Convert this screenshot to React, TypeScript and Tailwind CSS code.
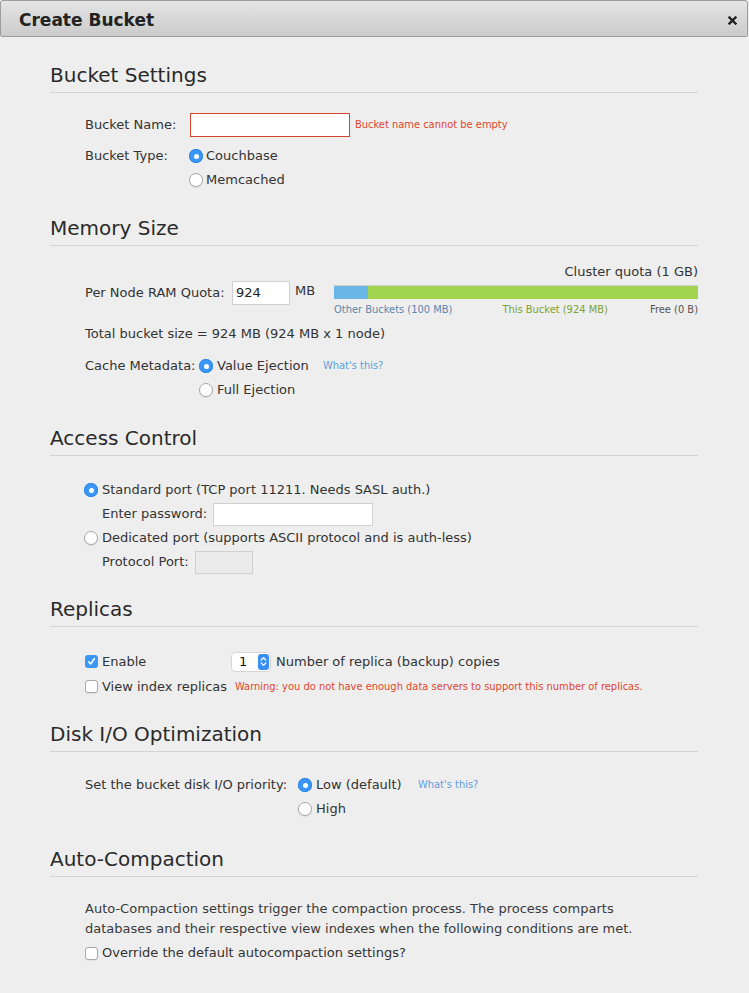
import React from 'react'

const small = "font-['DejaVu_Sans_Condensed','DejaVu_Sans',sans-serif] [font-stretch:condensed] text-[11px]"

function Radio({ checked }: { checked?: boolean }) {
  if (checked) {
    return (
      <span className="flex h-[14px] w-[14px] shrink-0 items-center justify-center rounded-full bg-[#3a97f7] shadow-[inset_0_0_0_1px_#2f88e8]">
        <span className="h-[5px] w-[5px] rounded-full bg-white" />
      </span>
    )
  }
  return <span className="h-[14px] w-[14px] shrink-0 rounded-full border border-[#a8a8a8] bg-white shadow-[0_1px_1px_rgba(0,0,0,0.08)]" />
}

function Checkbox({ checked }: { checked?: boolean }) {
  if (checked) {
    return (
      <span className="flex h-[13px] w-[13px] shrink-0 items-center justify-center rounded-[3px] bg-[#3a97f7]">
        <svg width="9" height="9" viewBox="0 0 9 9">
          <path d="M1.8 4.9L3.6 7L7.3 1.7" stroke="white" strokeWidth="1.6" fill="none" strokeLinecap="round" strokeLinejoin="round" />
        </svg>
      </span>
    )
  }
  return <span className="h-[13px] w-[13px] shrink-0 rounded-[3px] border border-[#a8a8a8] bg-white shadow-[0_1px_1px_rgba(0,0,0,0.06)]" />
}

function Section({ title, className, children }: { title: string; className?: string; children: React.ReactNode }) {
  return (
    <section className={className}>
      <h2 className="border-b border-[#d4d4d4] pb-[5px] text-[20px] leading-[24px] text-[#2a2a2a]">{title}</h2>
      {children}
    </section>
  )
}

export default function App() {
  return (
    <div className="min-h-[993px] bg-[#eeeeee] font-['DejaVu_Sans',sans-serif] text-[13px] leading-[18px] text-[#333]">
      {/* dialog header */}
      <div className="mr-[1px] flex h-[37px] items-start justify-between rounded-t-[3px] rounded-b-[2px] border border-[#9d9d9d] bg-linear-to-b from-[#e5e5e5] to-[#cbcbcb] pl-[18px] pr-[10px]">
        <h1 className="mt-[9px] text-[17px] font-bold leading-[20px] text-[#222]">Create Bucket</h1>
        <svg className="mt-[15px]" width="9" height="9" viewBox="0 0 9 9">
          <path d="M1.5 1.5L7.5 7.5M7.5 1.5L1.5 7.5" stroke="#222" strokeWidth="2.4" strokeLinecap="square" />
        </svg>
      </div>

      <div className="pl-[50px] pr-[51px]">
        <Section title="Bucket Settings" className="mt-[26px]">
          <div className="mt-[20px] pl-[35px]">
            <div className="flex h-[24px] items-center">
              <span className="w-[105px]">Bucket Name:</span>
              <div className="h-[24px] w-[160px] border border-[#d9432c] bg-white" />
              <span className={`ml-[5px] text-[#e0462d] ${small}`}>Bucket name cannot be empty</span>
            </div>
            <div className="mt-[7px] flex">
              <span className="w-[104px] leading-[24px]">Bucket Type:</span>
              <div>
                <div className="flex h-[24px] items-center">
                  <Radio checked />
                  <span className="ml-[3px]">Couchbase</span>
                </div>
                <div className="flex h-[24px] items-center">
                  <Radio />
                  <span className="ml-[3px]">Memcached</span>
                </div>
              </div>
            </div>
          </div>
        </Section>

        <Section title="Memory Size" className="mt-[24px]">
          <div className="mt-[17px] flex items-start pl-[35px]">
            <div className="mt-[18px] flex items-start">
              <span className="w-[147px] leading-[24px]">Per Node RAM Quota:</span>
              <div className="h-[24px] w-[58px] border border-[#d0d0d0] bg-white pl-[3px] leading-[22px] text-[#222]">924</div>
              <span className="ml-[5px] leading-[20px]">MB</span>
            </div>
            <div className="ml-auto w-[364px]">
              <div className="text-right">Cluster quota (1 GB)</div>
              <div className="mt-[4px] flex h-[14px] flex-col border-t border-[#cfcfcf] bg-white">
                <div className="flex h-[13px]">
                  <div className="w-[34px] bg-[#6ab6e7]" />
                  <div className="flex-1 bg-[#a1d54f]" />
                </div>
              </div>
              <div className={`mt-[4px] flex leading-[14px] ${small}`}>
                <span className="text-[#5b86ae]">Other Buckets (100 MB)</span>
                <span className="ml-[50px] text-[#7aa332]">This Bucket (924 MB)</span>
                <span className="ml-auto text-[#555]">Free (0 B)</span>
              </div>
            </div>
          </div>
          <div className="mt-[8px] pl-[35px]">Total bucket size = 924 MB (924 MB x 1 node)</div>
          <div className="mt-[11px] flex pl-[35px]">
            <span className="w-[114px] leading-[24px]">Cache Metadata:</span>
            <div>
              <div className="flex h-[24px] items-center">
                <Radio checked />
                <span className="ml-[4px] w-[106px]">Value Ejection</span>
                <span className={`text-[#5f9fdb] ${small}`}>What's this?</span>
              </div>
              <div className="flex h-[24px] items-center">
                <Radio />
                <span className="ml-[4px]">Full Ejection</span>
              </div>
            </div>
          </div>
        </Section>

        <Section title="Access Control" className="mt-[24px]">
          <div className="mt-[22px] pl-[34px]">
            <div className="flex h-[24px] items-center">
              <Radio checked />
              <span className="ml-[4px]">Standard port (TCP port 11211. Needs SASL auth.)</span>
            </div>
            <div className="flex h-[24px] items-center pl-[18px]">
              <span className="w-[111px]">Enter password:</span>
              <div className="h-[23px] w-[160px] border border-[#d0d0d0] bg-white" />
            </div>
            <div className="flex h-[24px] items-center">
              <Radio />
              <span className="ml-[4px]">Dedicated port (supports ASCII protocol and is auth-less)</span>
            </div>
            <div className="flex h-[24px] items-center pl-[18px]">
              <span className="w-[93px]">Protocol Port:</span>
              <div className="h-[23px] w-[58px] border border-[#d0d0d0] bg-[#ebebeb]" />
            </div>
          </div>
        </Section>

        <Section title="Replicas" className="mt-[23px]">
          <div className="mt-[22px] pl-[35px]">
            <div className="flex h-[25px] items-center">
              <Checkbox checked />
              <span className="ml-[4px] w-[130px]">Enable</span>
              <div className="flex h-[18px] w-[38px] items-center justify-between rounded-[4px] bg-white pl-[7px] pr-[1px] shadow-[0_0_0_1px_#d6d6d6,0_1px_1px_rgba(0,0,0,0.1)]">
                <span className="leading-[16px] text-[#111]">1</span>
                <span className="flex h-[16px] w-[11px] items-center justify-center rounded-[3px] bg-[#3a8ff2]">
                  <svg width="7" height="11" viewBox="0 0 7 11">
                    <path d="M1.2 4L3.5 1.8L5.8 4M1.2 7L3.5 9.2L5.8 7" stroke="white" strokeWidth="1.2" fill="none" strokeLinecap="round" strokeLinejoin="round" />
                  </svg>
                </span>
              </div>
              <span className="ml-[6px]">Number of replica (backup) copies</span>
            </div>
            <div className="flex h-[25px] items-center">
              <Checkbox />
              <span className="ml-[4px] w-[133px]">View index replicas</span>
              <span className={`text-[#e0462d] ${small}`}>Warning: you do not have enough data servers to support this number of replicas.</span>
            </div>
          </div>
        </Section>

        <Section title="Disk I/O Optimization" className="mt-[23px]">
          <div className="mt-[21px] flex pl-[35px]">
            <span className="w-[213px] leading-[24px]">Set the bucket disk I/O priority:</span>
            <div>
              <div className="flex h-[24px] items-center">
                <Radio checked />
                <span className="ml-[4px] w-[102px]">Low (default)</span>
                <span className={`text-[#5f9fdb] ${small}`}>What's this?</span>
              </div>
              <div className="flex h-[24px] items-center">
                <Radio />
                <span className="ml-[4px]">High</span>
              </div>
            </div>
          </div>
        </Section>

        <Section title="Auto-Compaction" className="mt-[26px]">
          <p className="mt-[22px] w-[600px] pl-[35px] leading-[20px] text-[#3a3a3a]">
            Auto-Compaction settings trigger the compaction process. The process comparts databases and their respective view indexes when the following conditions are met.
          </p>
          <div className="mt-[2px] flex h-[24px] items-center pl-[35px]">
            <Checkbox />
            <span className="ml-[4px]">Override the default autocompaction settings?</span>
          </div>
        </Section>
      </div>
    </div>
  )
}
